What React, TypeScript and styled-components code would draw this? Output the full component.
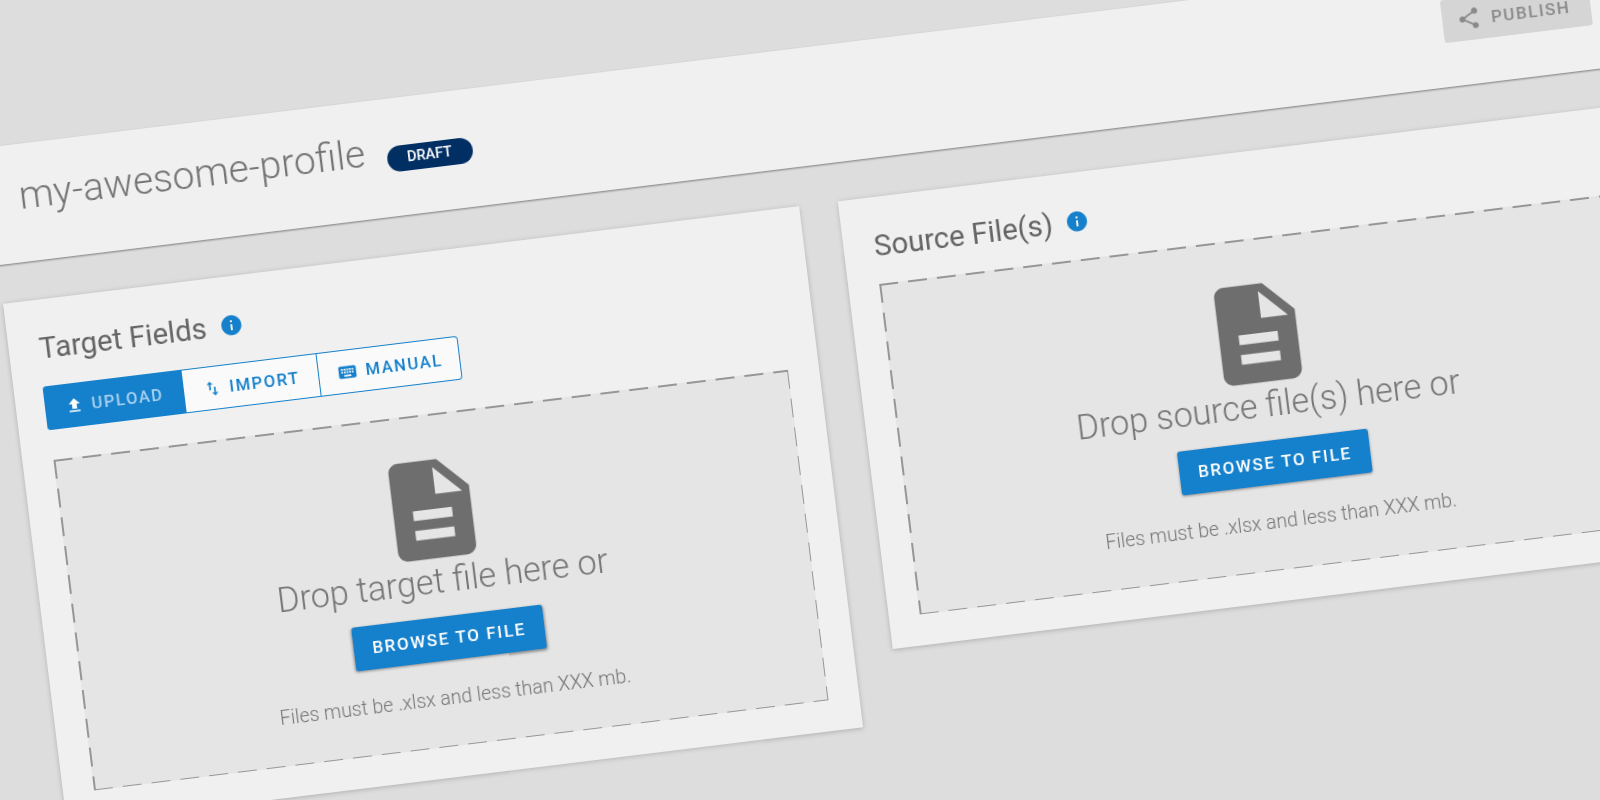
import styled, { createGlobalStyle } from 'styled-components';
import { MdDescription, MdFileUpload, MdInfo, MdKeyboard, MdShare, MdSwapVert } from 'react-icons/md';

const BLUE = '#1580cb';

const GlobalStyle = createGlobalStyle`
  html, body {
    margin: 0;
    height: 100%;
    overflow: hidden;
    background: #dddddd;
    font-family: Roboto, "Liberation Sans", sans-serif;
  }
`;

function DropArea({ text }: { text: string }) {
  return (
    <DropZone>
      <FileIcon />
      <DropText>{text}</DropText>
      <BrowseButton>BROWSE TO FILE</BrowseButton>
      <HintText>Files must be .xlsx and less than XXX mb.</HintText>
    </DropZone>
  );
}

export default function App() {
  return (
    <>
      <GlobalStyle />
      <Stage>
        <Header>
          <TitleGroup>
            <ProfileName>my-awesome-profile</ProfileName>
            <Badge>DRAFT</Badge>
          </TitleGroup>
          <PublishButton>
            <MdShare size={25} />
            PUBLISH
          </PublishButton>
        </Header>
        <Columns>
          <Card>
            <CardTitle>
              Target Fields
              <InfoIcon />
            </CardTitle>
            <Toggle>
              <ToggleItem $width={139} $active>
                <MdFileUpload size={19} />
                UPLOAD
              </ToggleItem>
              <ToggleItem $width={135}>
                <MdSwapVert size={19} />
                IMPORT
              </ToggleItem>
              <ToggleItem $width={142}>
                <MdKeyboard size={21} />
                MANUAL
              </ToggleItem>
            </Toggle>
            <DropArea text="Drop target file here or" />
          </Card>
          <Card>
            <CardTitle>
              Source File(s)
              <InfoIcon />
            </CardTitle>
            <DropArea text="Drop source file(s) here or" />
          </Card>
        </Columns>
      </Stage>
    </>
  );
}

const Stage = styled.div`
  width: 1721px;
  padding-top: 145px;
  transform-origin: 0 0;
  transform: rotate(-7deg) translateX(-73px);
  filter: blur(0.65px);
`;

const Header = styled.header`
  display: flex;
  justify-content: space-between;
  align-items: center;
  height: 118px;
  box-sizing: border-box;
  padding: 31px 70px 44px 68px;
  background: #f0f0f0;
  box-shadow: 0 1px 2px rgba(0, 0, 0, 0.45);
`;

const TitleGroup = styled.div`
  display: flex;
  align-items: baseline;
  gap: 21px;
`;

const ProfileName = styled.h1`
  margin: 0;
  font-size: 39px;
  line-height: 43px;
  font-weight: 300;
  color: #757575;
`;

const Badge = styled.span`
  display: inline-flex;
  align-items: center;
  justify-content: center;
  width: 86px;
  height: 26px;
  border-radius: 13px;
  background: #012f63;
  color: #ffffff;
  font-size: 14.5px;
  font-weight: 500;
`;

const PublishButton = styled.button`
  display: flex;
  align-items: center;
  gap: 10px;
  box-sizing: border-box;
  width: 149px;
  height: 43px;
  padding: 0 0 0 14px;
  border: 0;
  border-radius: 3px;
  background: #d5d5d5;
  color: #8a8a8a;
  font-family: inherit;
  font-size: 17px;
  font-weight: 500;
  letter-spacing: 1.5px;
`;

const Columns = styled.main`
  display: grid;
  grid-template-columns: 1fr 1fr;
  gap: 39px;
  align-items: start;
  padding: 39px;
`;

const Card = styled.section`
  padding: 31px;
  background: #f0f0f0;
  box-shadow: 0 1px 5px rgba(0, 0, 0, 0.22);
`;

const CardTitle = styled.h2`
  display: flex;
  align-items: center;
  gap: 13px;
  height: 26px;
  margin: 5px 0 25px -0.5px;
  font-size: 29.4px;
  font-weight: 400;
  color: #646464;
`;

const InfoIcon = styled(MdInfo)`
  width: 24px;
  height: 24px;
  color: ${BLUE};
`;

const Toggle = styled.div`
  display: flex;
  width: fit-content;
  height: 44px;
  margin: 1px 0 30px -2px;
  border-radius: 4px;
  overflow: hidden;
  box-shadow: inset 0 0 0 1px ${BLUE};
  background: #fafafa;
`;

const ToggleItem = styled.div<{ $width: number; $active?: boolean }>`
  display: flex;
  align-items: center;
  justify-content: center;
  gap: 8px;
  width: ${(p) => p.$width}px;
  font-size: 16.6px;
  font-weight: 500;
  letter-spacing: 1.6px;
  color: ${(p) => (p.$active ? '#a9d0ee' : BLUE)};
  background: ${(p) => (p.$active ? BLUE : 'transparent')};
  border-left: ${(p) => (p.$active ? '0' : `1px solid ${BLUE}`)};

  svg {
    color: ${(p) => (p.$active ? '#ffffff' : BLUE)};
  }
`;

const DASH = '#969696';

const DropZone = styled.div`
  display: flex;
  flex-direction: column;
  align-items: center;
  box-sizing: border-box;
  height: 333px;
  padding-top: 36px;
  background-color: #e5e5e5;
  background-image:
    linear-gradient(to right, ${DASH} 19px, transparent 0),
    linear-gradient(to right, ${DASH} 19px, transparent 0),
    linear-gradient(to bottom, ${DASH} 19px, transparent 0),
    linear-gradient(to bottom, ${DASH} 19px, transparent 0);
  background-size: 29px 1.5px, 29px 1.5px, 1.5px 29px, 1.5px 29px;
  background-position: 0 0, 0 100%, 0 0, 100% 0;
  background-repeat: repeat-x, repeat-x, repeat-y, repeat-y;
`;

const FileIcon = styled(MdDescription)`
  flex: none;
  width: 118px;
  height: 118px;
  color: #6e6e6e;
`;

const DropText = styled.p`
  margin: -6px 0 0 3px;
  font-size: 34.2px;
  line-height: 38px;
  font-weight: 300;
  color: #757575;
`;

const BrowseButton = styled.button`
  width: 192px;
  height: 44px;
  margin: 17px 0 0 2px;
  padding: 0;
  border: 0;
  border-radius: 3px;
  background: ${BLUE};
  color: #ffffff;
  font-family: inherit;
  font-size: 17px;
  font-weight: 500;
  letter-spacing: 1.7px;
  box-shadow: 0 1px 3px rgba(0, 0, 0, 0.4);
`;

const HintText = styled.p`
  margin: 26px 0 0;
  font-size: 19.5px;
  line-height: 24px;
  font-weight: 300;
  color: #757575;
`;
